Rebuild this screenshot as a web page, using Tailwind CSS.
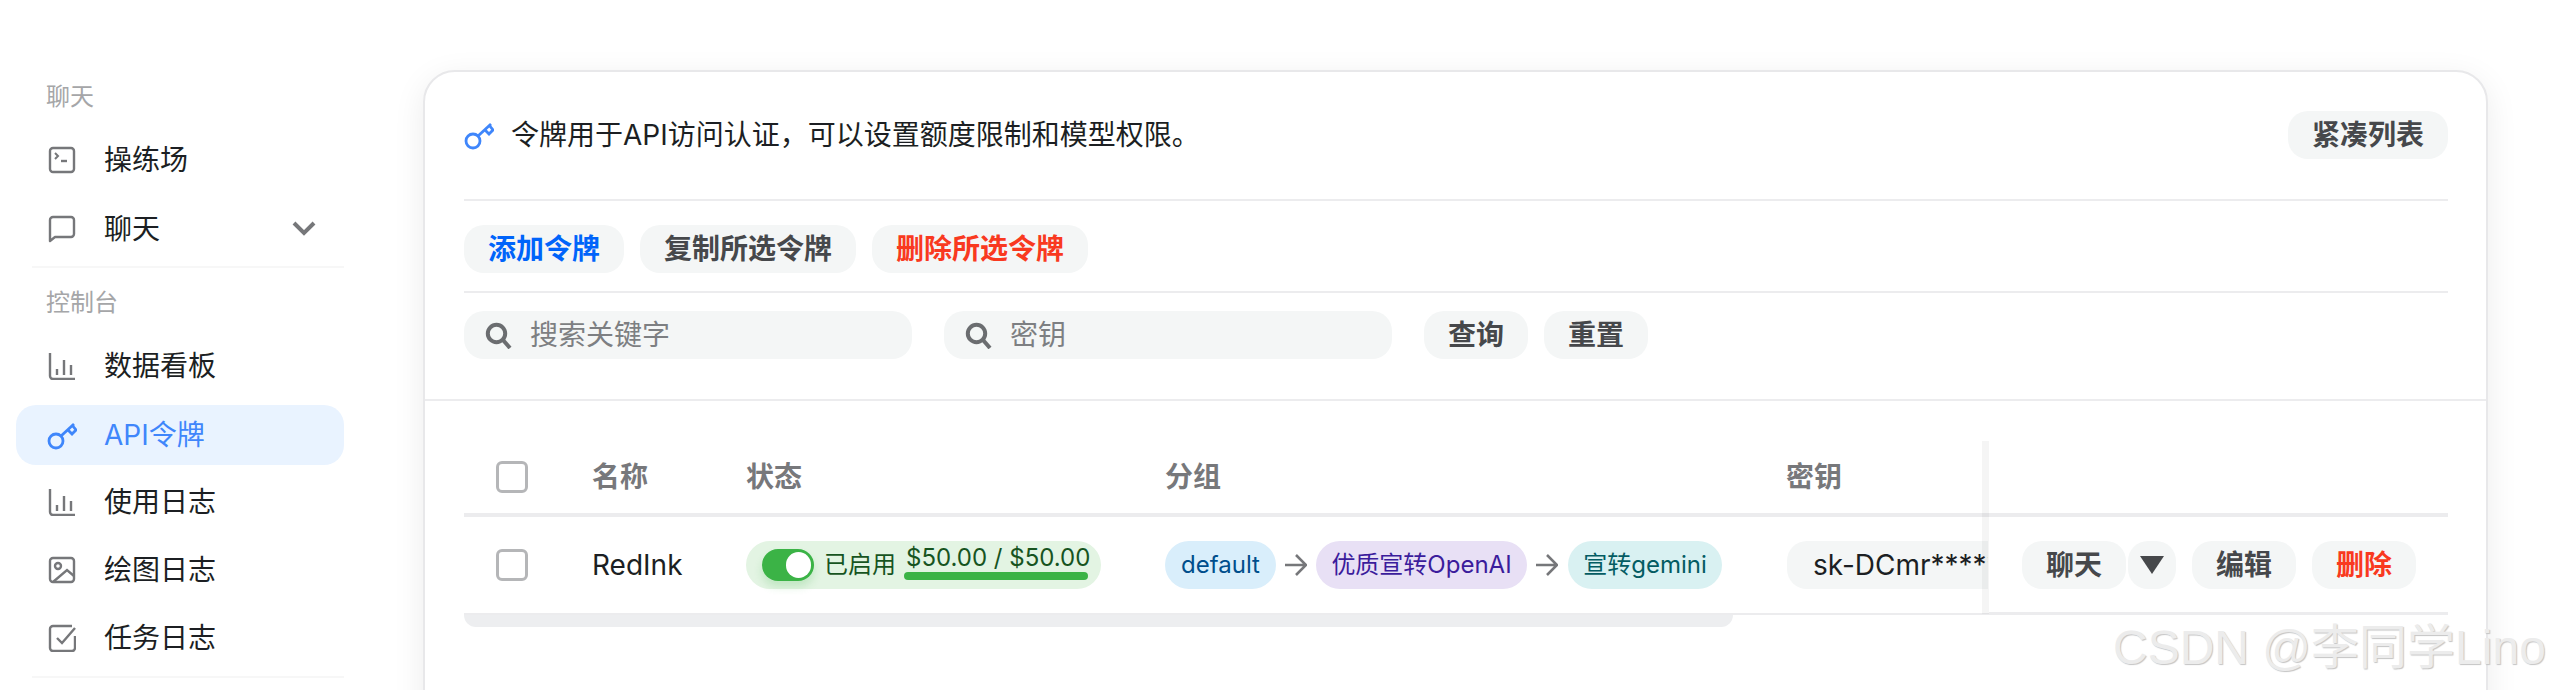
<!doctype html>
<html lang="zh-CN">
<head>
<meta charset="utf-8">
<script src="https://cdn.jsdelivr.net/npm/@tailwindcss/browser@4"></script>
</head>
<body class="m-0 h-[690px] w-[2552px] overflow-hidden bg-white font-['Inter','Noto_Sans_CJK_SC',sans-serif] text-[28px] leading-[40px] text-[#1c1f23]">
<div class="relative flex h-[690px] w-[2552px] overflow-hidden">
  <!-- sidebar -->
  <aside class="h-[690px] w-[400px] shrink-0 overflow-hidden pl-4 pt-[80px]">
    <div class="w-[328px]">
      <div class="flex h-[34px] items-center pl-[30px] text-[24px] text-[#a5a6a8]">聊天</div>
      <div class="mt-[16px] flex h-[60px] items-center gap-[28px] pl-[32px] pr-4">
        <svg class="h-7 w-7 shrink-0" viewBox="0 0 28 28" fill="none" stroke="#76777a" stroke-width="2.4"><rect x="2" y="2" width="24" height="24" rx="3"/><path d="M7 7l3 3-3 3" stroke-width="2"/><path d="M13 15h6"/></svg>
        <span>操练场</span>
      </div>
      <div class="mt-[9px] flex h-[60px] items-center gap-[28px] pl-[32px] pr-4">
        <svg class="h-7 w-7 shrink-0" viewBox="0 0 28 28" fill="none" stroke="#76777a" stroke-width="2.4" stroke-linejoin="round"><path d="M2 26V5a3 3 0 0 1 3-3h18a3 3 0 0 1 3 3v14a3 3 0 0 1-3 3H7z"/></svg>
        <span>聊天</span>
        <svg class="ml-auto mr-[12px] h-[24px] w-[24px]" viewBox="0 0 24 24" fill="none" stroke="#76777a" stroke-width="4"><path d="M2 6l10 10L22 6"/></svg>
      </div>
      <div class="ml-4 mt-[7px] h-[2px] bg-[#f7f7f7]"></div>
      <div class="mt-[18px] flex h-[34px] items-center pl-[30px] text-[24px] text-[#a5a6a8]">控制台</div>
      <div class="mt-[16px] flex h-[60px] items-center gap-[28px] pl-[32px] pr-4">
        <svg class="h-7 w-7 shrink-0" viewBox="0 0 28 28" fill="none" stroke="#76777a" stroke-width="2.4"><path d="M2 1v23a3 3 0 0 0 3 3h22"/><path d="M9 17v6M16 8v15M23 13v10"/></svg>
        <span>数据看板</span>
      </div>
      <div class="mt-[9px] flex h-[60px] items-center gap-[27px] rounded-[20px] bg-[#e9f3ff] pl-[31px] pr-4 text-[#3f86fb]">
        <svg class="h-[30px] w-[30px] shrink-0" viewBox="0 0 30 30" fill="none" stroke="#3f86fb" stroke-width="2.8"><circle cx="9" cy="21" r="7"/><path d="M14 16L27 4"/><path d="M21 10l4 4 4-4-4-5"/></svg>
        <span>API令牌</span>
      </div>
      <div class="mt-[7px] flex h-[60px] items-center gap-[28px] pl-[32px] pr-4">
        <svg class="h-7 w-7 shrink-0" viewBox="0 0 28 28" fill="none" stroke="#76777a" stroke-width="2.4"><path d="M2 1v23a3 3 0 0 0 3 3h22"/><path d="M9 17v6M16 8v15M23 13v10"/></svg>
        <span>使用日志</span>
      </div>
      <div class="mt-[8px] flex h-[60px] items-center gap-[28px] pl-[32px] pr-4">
        <svg class="h-7 w-7 shrink-0" viewBox="0 0 28 28" fill="none" stroke="#76777a" stroke-width="2.4"><rect x="2" y="2" width="24" height="24" rx="3"/><circle cx="10" cy="10" r="3"/><path d="M5 26l14-12 7 6"/></svg>
        <span>绘图日志</span>
      </div>
      <div class="mt-[8px] flex h-[60px] items-center gap-[28px] pl-[32px] pr-4">
        <svg class="h-7 w-7 shrink-0" viewBox="0 0 28 28" fill="none" stroke="#76777a" stroke-width="2.4"><path d="M24 2H5a3 3 0 0 0-3 3v19a3 3 0 0 0 3 3h19a3 3 0 0 0 3-3V12"/><path d="M9 14l5 5L27 4"/></svg>
        <span>任务日志</span>
      </div>
      <div class="ml-4 mt-[8px] h-[2px] bg-[#f7f7f7]"></div>
    </div>
  </aside>

  <!-- main -->
  <main class="min-w-0 flex-1 pl-[23px] pt-[70px]">
    <section class="h-[700px] w-[2065px] rounded-[32px] border-2 border-[#e8e8ea] bg-white shadow-[0_8px_32px_rgba(0,0,0,0.08)]">
      <div class="pl-[39px] pr-[38px] pt-[38px]">
        <div class="flex h-[50px] items-center">
          <svg class="h-[30px] w-[30px]" viewBox="0 0 30 30" fill="none" stroke="#3f86fb" stroke-width="2.8"><circle cx="9" cy="21" r="7"/><path d="M14 16L27 4"/><path d="M21 10l4 4 4-4-4-5"/></svg>
          <span class="ml-[17px]">令牌用于API访问认证，可以设置额度限制和模型权限。</span>
          <button class="ml-auto h-12 rounded-[20px] bg-[#f4f6f6] px-6 font-bold text-[#46484b]">紧凑列表</button>
        </div>
        <div class="mt-[39px] h-[2px] bg-[#ececee]"></div>
        <div class="mt-[24px] flex gap-4">
          <button class="h-12 rounded-[20px] bg-[#f4f6f6] px-6 font-bold text-[#0064fa]">添加令牌</button>
          <button class="h-12 rounded-[20px] bg-[#f4f6f6] px-6 font-bold text-[#46484b]">复制所选令牌</button>
          <button class="h-12 rounded-[20px] bg-[#f4f6f6] px-6 font-bold text-[#f93920]">删除所选令牌</button>
        </div>
        <div class="mt-[18px] h-[2px] bg-[#ececee]"></div>
        <div class="mt-[18px] flex items-center">
          <div class="flex h-12 w-[448px] items-center rounded-[20px] bg-[#f4f6f6] pl-[21px] text-[#7d7f82]">
            <svg class="h-[27px] w-[27px]" viewBox="0 0 27 27" fill="none" stroke="#6b6d70" stroke-width="4"><circle cx="11.5" cy="11.5" r="8.7"/><path d="M18 18l7 8"/></svg>
            <span class="ml-[18px]">搜索关键字</span>
          </div>
          <div class="ml-8 flex h-12 w-[448px] items-center rounded-[20px] bg-[#f4f6f6] pl-[21px] text-[#7d7f82]">
            <svg class="h-[27px] w-[27px]" viewBox="0 0 27 27" fill="none" stroke="#6b6d70" stroke-width="4"><circle cx="11.5" cy="11.5" r="8.7"/><path d="M18 18l7 8"/></svg>
            <span class="ml-[18px]">密钥</span>
          </div>
          <button class="ml-8 h-12 w-[104px] rounded-[20px] bg-[#f4f6f6] font-bold text-[#46484b]">查询</button>
          <button class="ml-4 h-12 w-[104px] rounded-[20px] bg-[#f4f6f6] font-bold text-[#46484b]">重置</button>
        </div>
      </div>
      <div class="mt-[40px] h-[2px] bg-[#ececee]"></div>

      <!-- table -->
      <div class="relative ml-[39px] mr-[38px] mt-[45px]">
        <div class="flex h-[71px] items-center border-b-4 border-[#ececee] pb-[5px] font-bold text-[#77787b]">
          <span class="ml-[32px] block h-8 w-8 rounded-[6px] border-[3px] border-[#b5b6b8]"></span>
          <span class="ml-[64px] w-[154px]">名称</span>
          <span class="w-[419px]">状态</span>
          <span class="w-[621px]">分组</span>
          <span>密钥</span>
        </div>
        <div class="flex h-[98px] items-center border-b-2 border-[#ececee]">
          <span class="ml-[32px] block h-8 w-8 rounded-[6px] border-[3px] border-[#b5b6b8]"></span>
          <span class="ml-[64px] w-[154px]">RedInk</span>
          <div class="flex h-12 w-[355px] items-center rounded-[24px] bg-[#e3f4e3] pl-4 text-[24px] text-[#17541f]">
            <span class="relative block h-8 w-[52px] rounded-[16px] bg-[#3bb346] shadow-[0_6px_8px_rgba(59,179,70,0.2)]"><span class="absolute right-[3px] top-[3px] block h-[26px] w-[25px] rounded-full bg-white"></span></span>
            <span class="ml-[10px]">已启用</span>
            <span class="ml-[8px] flex w-[184px] flex-col leading-[24px]"><span class="-mt-[4px] ml-[2px] whitespace-nowrap">$50.00 / $50.00</span><span class="mt-[2px] block h-2 rounded bg-[#3bb346]"></span></span>
          </div>
          <div class="ml-[64px] flex w-[622px] items-center text-[24px]">
            <span class="flex h-12 w-[111px] items-center justify-center rounded-[24px] bg-[#d9eefb] text-[#004e8c]">default</span>
            <svg class="mx-[9px] h-[24px] w-[22px]" viewBox="0 0 22 24" fill="none" stroke="#76777a" stroke-width="2.6"><path d="M0 12h20M11 2l10 10-10 10"/></svg>
            <span class="flex h-12 w-[211px] items-center justify-center whitespace-nowrap rounded-[24px] bg-[#e8e0f5] text-[#3b1c9c]">优质宣转OpenAI</span>
            <svg class="ml-[9px] mr-[10px] h-[24px] w-[22px]" viewBox="0 0 22 24" fill="none" stroke="#76777a" stroke-width="2.6"><path d="M0 12h20M11 2l10 10-10 10"/></svg>
            <span class="flex h-12 w-[154px] items-center justify-center whitespace-nowrap rounded-[24px] bg-[#d9f1f2] text-[#045c63]">宣转gemini</span>
          </div>
          <div class="flex h-12 w-[201px] items-center overflow-hidden whitespace-nowrap rounded-l-[20px] bg-[#f4f6f6] pl-[26px]">sk-DCmr**********</div>
        </div>
        <!-- fixed action column -->
        <div class="absolute right-0 top-[-5px] flex h-[173px] w-[459px] flex-col bg-white">
          <div class="absolute left-[-7px] top-0 h-[173px] w-[7px] bg-black/[0.04]"></div>
          <div class="h-[76px] shrink-0 border-b-4 border-[#ececee]"></div>
          <div class="flex h-[97px] items-start gap-4 border-b-2 border-[#ececee] pl-[33px] pt-[24px]">
            <div class="flex gap-[2px]">
              <button class="h-12 w-[104px] rounded-[20px] bg-[#f4f6f6] font-bold text-[#46484b]">聊天</button>
              <button class="flex h-12 w-[48px] items-center justify-center rounded-[20px] bg-[#f4f6f6]"><svg class="h-[20px] w-[24px]" viewBox="0 0 24 20"><path d="M0 1h24L12 19z" fill="#46484b"/></svg></button>
            </div>
            <button class="h-12 w-[104px] rounded-[20px] bg-[#f4f6f6] font-bold text-[#46484b]">编辑</button>
            <button class="h-12 w-[104px] rounded-[20px] bg-[#f4f6f6] font-bold text-[#f93920]">删除</button>
          </div>
        </div>
        <div class="h-[12px] w-[1269px] rounded-b-[16px] bg-[#edeef0]"></div>
      </div>
    </section>
  </main>

  <!-- image watermark -->
  <div class="pointer-events-none absolute left-[2113px] top-[618px] whitespace-nowrap font-['Liberation_Sans','Noto_Sans_CJK_SC',sans-serif] text-[48px] leading-[60px] text-[#ececec] [text-shadow:1px_1px_1px_#c4c4c4]">CSDN @李同学Lino</div>
</div>
</body>
</html>
